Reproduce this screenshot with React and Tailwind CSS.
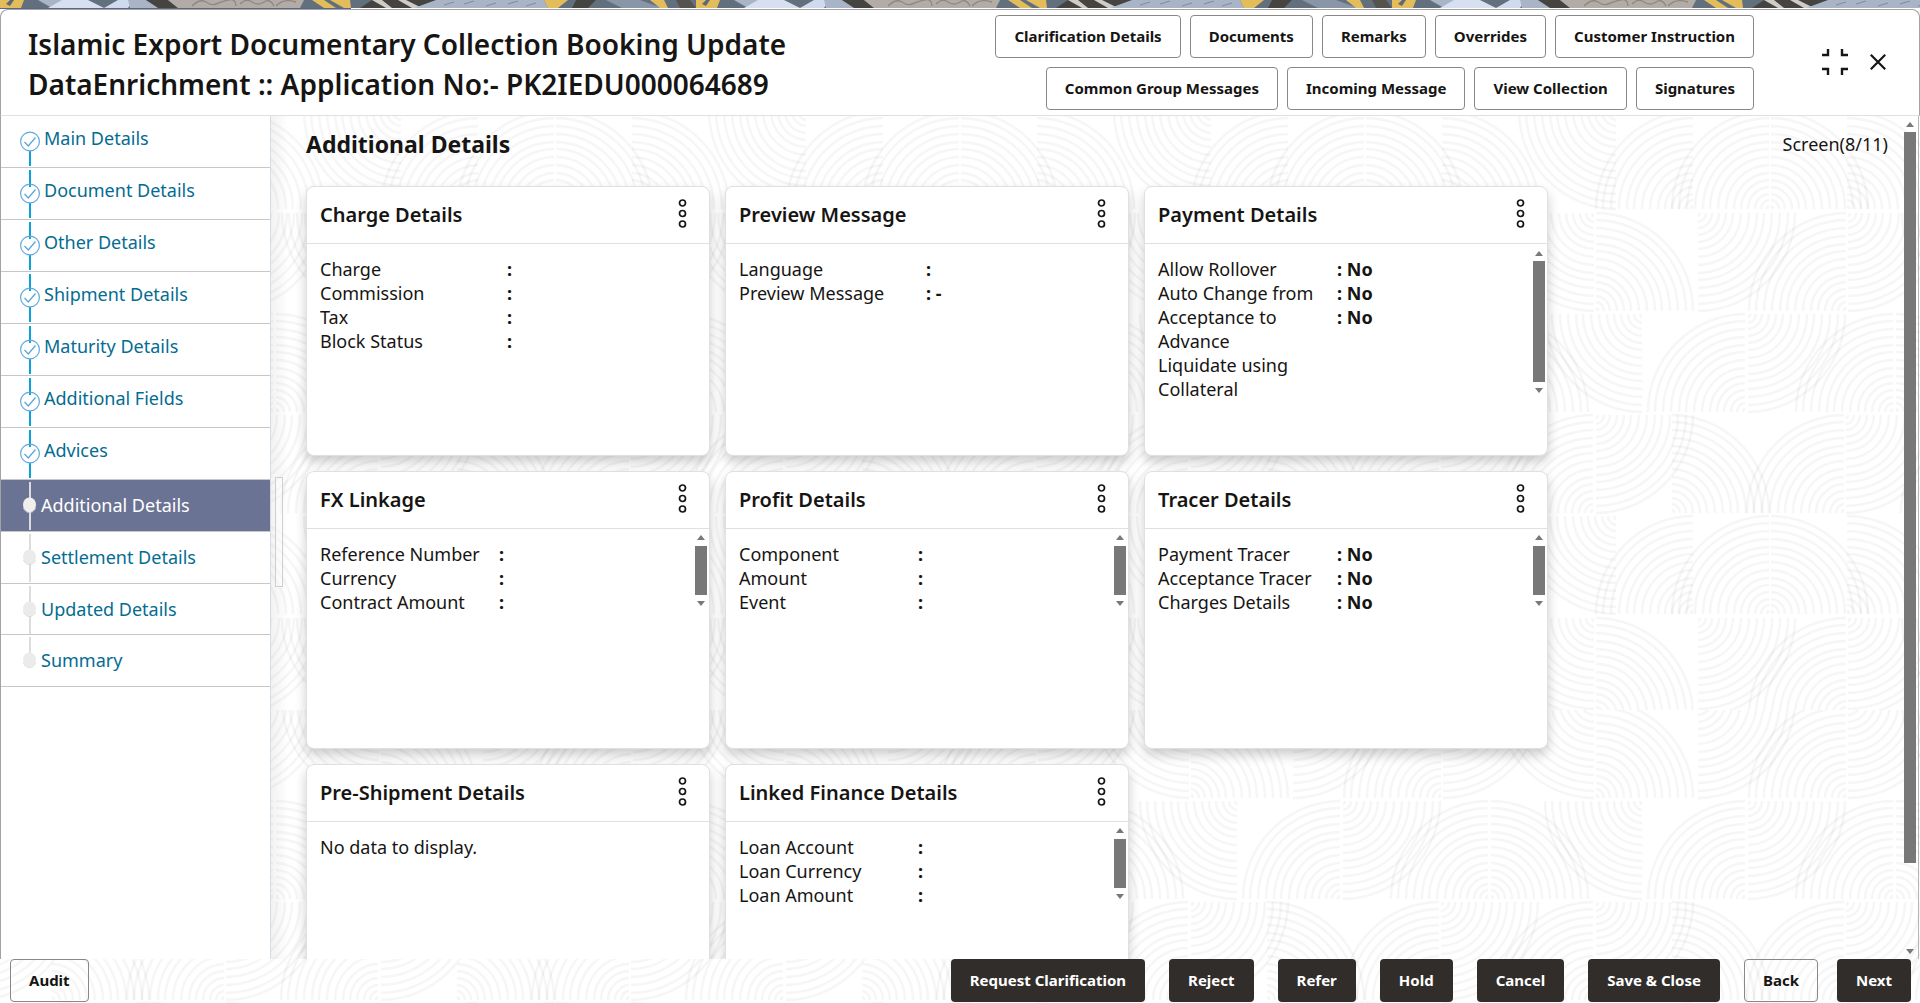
import React, { useId } from "react";

/* ---------- decorative backgrounds ---------- */

const TILE = 405;

// Quarter fans of concentric arcs: [centre x, row, vertical edge, horizontal direction]
const FANS = [
  [77, 3, "top", -1], [154, 3, "bottom", -1], [230, 3, "bottom", -1], [230, 3, "bottom", 1], [306, 3, "bottom", 1],
  [55, 0, "top", -1], [55, 0, "bottom", 1], [157, 0, "top", 1], [307, 0, "bottom", -1], [307, 0, "top", 1],
  [103, 1, "top", -1], [206, 1, "bottom", -1], [207, 1, "top", 1], [354, 1, "bottom", -1], [355, 1, "bottom", 1],
  [54, 2, "bottom", -1], [55, 2, "top", 1], [131, 2, "bottom", 1], [305, 2, "bottom", -1], [305, 2, "top", 1],
];
const RADII = [3, 9, 15, 22, 29, 36, 44, 52, 60, 67, 75, 83, 91, 98];

function fanPath([cx, row, edge, dir]) {
  const top = row * 101 + 2;
  const cy = edge === "top" ? top : top + 98;
  const sy = edge === "top" ? 1 : -1;
  const sweep = dir * sy > 0 ? 1 : 0;
  return RADII.map((r) =>
    [-TILE, 0, TILE]
      .map((s) => `M${cx + s + dir * r} ${cy}A${r} ${r} 0 0 ${sweep} ${cx + s + dir} ${cy + sy * r}`)
      .join("")
  ).join("");
}

function Waves({ offsetY }) {
  const id = useId();
  return (
    <svg aria-hidden="true" className="block h-full w-full">
      <defs>
        <pattern id={id} x="-80" y={offsetY} width={TILE} height={TILE} patternUnits="userSpaceOnUse">
          {FANS.map((f, i) => (
            <path key={i} d={fanPath(f)} fill="none" stroke="#000" strokeOpacity="0.034" strokeWidth="2.4" />
          ))}
        </pattern>
      </defs>
      <rect width="100%" height="100%" fill={`url(#${id})`} />
    </svg>
  );
}

function Banner() {
  const id = useId();
  return (
    <svg aria-hidden="true" className="block h-2 w-full">
      <defs>
        <pattern id={id} width="696" height="8" patternUnits="userSpaceOnUse">
          <rect width="696" height="8" fill="#61707c" />
          <path d="M0 0H24L21 8H0Z" fill="#e3bd5c" />
          <path d="M10 0l4 0l-4 6l-4-2z" fill="#5d6a74" />
          <path d="M38 0H70L90 8H52Z" fill="#a9b4c6" />
          <path d="M62 0H88L104 8H72L48 8Z" fill="#d6e0f1" />
          <path d="M118 0H134L128 8H104Z" fill="#cfdaee" />
          <path d="M128 0H146L160 8H130Z" fill="#a9b4c6" />
          <path d="M146 0H168L178 8H158Z" fill="#464440" />
          <path d="M168 0H304L300 8H178Z" fill="#b3aca6" />
          <path d="M192 6q8-8 14-4t10 2t12-4t8 6M240 4q6-6 12-2t12 0t10 4M276 6q8-8 20-4" stroke="#8e8882" fill="none" strokeWidth="1.4" />
          <path d="M312 0H324L336 8H324Z" fill="#e3bd5c" />
          <path d="M330 0H350L351 8H344Z" fill="#e3bd5c" />
          <path d="M372 0H440L424 8H360Z" fill="#464440" />
          <path d="M372 0H382L392 8H386Z" fill="#cfcbc6" />
          <path d="M398 0H406L422 8H412Z" fill="#cfcbc6" />
          <path d="M436 0H544L548 8H414Z" fill="#a9b4c6" />
          <path d="M444 5l10-3M464 4l10-3M486 6l10-3M508 4l10-3M526 6l10-3" stroke="#7e8a9c" strokeWidth="1" />
          <path d="M544 0H568L558 8H548Z" fill="#e3bd5c" />
          <path d="M576 0H596L588 8H572Z" fill="#464440" />
          <path d="M606 0H640L662 8H622Z" fill="#8996a8" />
          <path d="M650 0H664L668 8H660Z" fill="#e3bd5c" />
          <path d="M676 0H690L696 8H680Z" fill="#55534d" />
        </pattern>
      </defs>
      <rect width="100%" height="8" fill={`url(#${id})`} />
    </svg>
  );
}

/* ---------- small parts ---------- */

const Arrow = ({ down }) => (
  <svg aria-hidden="true" width="8" height="5" viewBox="0 0 8 5">
    <path d={down ? "M0 0H8L4 5Z" : "M0 5H8L4 0Z"} fill="#787878" />
  </svg>
);

function ScrollTrack({ className, thumb }) {
  return (
    <div className={`flex w-3 shrink-0 flex-col items-center ${className}`}>
      <div className="flex h-4 items-center"><Arrow /></div>
      <div className={`w-full bg-[#787878] ${thumb}`} />
      <div className="mt-auto flex h-4 items-center"><Arrow down /></div>
    </div>
  );
}

function OutlineButton({ children }) {
  return (
    <button type="button" className="h-[43px] rounded border border-[#8b8782] px-[18px] text-[15px] font-bold whitespace-nowrap text-[#161513]">
      {children}
    </button>
  );
}

function DarkButton({ children }) {
  return (
    <button type="button" className="h-[43px] rounded bg-[#312d2a] px-[19px] text-[15px] font-bold whitespace-nowrap text-white">
      {children}
    </button>
  );
}

/* ---------- header ---------- */

const ACTIONS = [
  "Clarification Details", "Documents", "Remarks", "Overrides", "Customer Instruction",
  "Common Group Messages", "Incoming Message", "View Collection", "Signatures",
];

function Header() {
  return (
    <header className="flex h-[107px] shrink-0 items-start rounded-t-lg border border-[#a3a3a3] border-b-[#e0e0e0] bg-white">
      <h1 className="w-[820px] shrink-0 pt-[14px] pl-[27px] text-[28px] leading-10 font-semibold">
        Islamic Export Documentary Collection Booking Update DataEnrichment :: Application No:- PK2IEDU000064689
      </h1>
      <div className="ml-auto flex w-[780px] flex-wrap justify-end gap-[9px] pt-[5px]">
        {ACTIONS.map((a) => <OutlineButton key={a}>{a}</OutlineButton>)}
      </div>
      <div className="flex w-[165px] shrink-0 items-center justify-end gap-[22px] pt-[39px] pr-[33px]">
        <button type="button" aria-label="Collapse">
          <svg width="26" height="26" viewBox="0 0 26 26" fill="none" stroke="#161513" strokeWidth="2.4">
            <path d="M0 6H6V0M20 0V6H26M0 20H6V26M20 26V20H26" />
          </svg>
        </button>
        <button type="button" aria-label="Close">
          <svg width="16" height="16" viewBox="0 0 16 16" fill="none" stroke="#161513" strokeWidth="2.2">
            <path d="M0.8 0.8L15.2 15.2M15.2 0.8L0.8 15.2" />
          </svg>
        </button>
      </div>
    </header>
  );
}

/* ---------- navigation ---------- */

const STEPS = [
  ["Main Details", "done"], ["Document Details", "done"], ["Other Details", "done"], ["Shipment Details", "done"],
  ["Maturity Details", "done"], ["Additional Fields", "done"], ["Advices", "done"], ["Additional Details", "active"],
  ["Settlement Details", "todo"], ["Updated Details", "todo"], ["Summary", "todo"],
];

function StepMark({ state, first, last }) {
  if (state === "done") {
    return (
      <svg aria-hidden="true" className="block" width="22" height="51" viewBox="0 0 22 51" fill="none">
        {!first && <path d="M11 2V19" stroke="#0ba1db" strokeWidth="2" />}
        <path d="M11 35V50" stroke="#0ba1db" strokeWidth="2" />
        <circle cx="11" cy="25.500" r="9.400" stroke="#5fa9dd" strokeWidth="1.200" />
        <path d="M5.500 26L9.300 30L16.500 21.500" stroke="#5fa9dd" strokeWidth="1.400" />
      </svg>
    );
  }
  return (
    <svg aria-hidden="true" className="block" width="22" height="51" viewBox="0 0 22 51" fill="none">
      <path d={last ? "M11 2V24" : "M11 2V50"} stroke="#dcdcdc" strokeWidth="2" />
      <ellipse cx="10.500" cy="24.800" rx="6.500" ry="7.400" fill={state === "active" ? "#f1efed" : "#ebebeb"} />
      <path d="M4.500 28a6.500 7.400 0 0 0 12 0" stroke="#d6d6d6" strokeWidth="0.800" />
    </svg>
  );
}

function Steps() {
  return (
    <nav className="w-[271px] shrink-0 border-r border-l border-r-[#d3dde5] border-l-[#a3a3a3] bg-white">
      <ol>
        {STEPS.map(([label, state], i) => (
          <li key={label} className={`border-b border-[#c9c7c5] ${state === "active" ? "bg-[#6b7394]" : ""}`}>
            <a
              href="#"
              className={`flex pl-[18px] text-lg ${state === "active" ? "text-white" : "text-[#036c92]"} ${i === 9 ? "h-[50px]" : "h-[51px]"}`}
            >
              <StepMark state={state} first={i === 0} last={i === STEPS.length - 1} />
              <span className={state === "done" ? "ml-[3px] leading-[44px]" : "leading-[51px]"}>{label}</span>
            </a>
          </li>
        ))}
      </ol>
    </nav>
  );
}

/* ---------- cards ---------- */

const SHORT = { track: "h-[81px]", thumb: "h-[50px]" };

const CARDS = [
  { title: "Charge Details", height: "h-[270px]", label: "w-[187px]",
    labels: ["Charge", "Commission", "Tax", "Block Status"], values: ["", "", "", ""] },
  { title: "Preview Message", height: "h-[270px]", label: "w-[187px]",
    labels: ["Language", "Preview Message"], values: ["", "-"] },
  { title: "Payment Details", height: "h-[270px]", label: "w-[179px]",
    labels: ["Allow Rollover", "Auto Change from Acceptance to Advance", "Liquidate using Collateral"],
    values: ["No", "No", "No"], scroll: { track: "h-[153px]", thumb: "h-[121px]" } },
  { title: "FX Linkage", height: "h-[278px]", label: "w-[179px]",
    labels: ["Reference Number", "Currency", "Contract Amount"], values: ["", "", ""], scroll: SHORT },
  { title: "Profit Details", height: "h-[278px]", label: "w-[179px]",
    labels: ["Component", "Amount", "Event"], values: ["", "", ""], scroll: SHORT },
  { title: "Tracer Details", height: "h-[278px]", label: "w-[179px]",
    labels: ["Payment Tracer", "Acceptance Tracer", "Charges Details"], values: ["No", "No", "No"], scroll: SHORT },
  { title: "Pre-Shipment Details", height: "h-[278px]", empty: "No data to display." },
  { title: "Linked Finance Details", height: "h-[278px]", label: "w-[179px]",
    labels: ["Loan Account", "Loan Currency", "Loan Amount"], values: ["", "", ""], scroll: SHORT },
];

function Card({ card }) {
  return (
    <section className={`flex w-[404px] flex-col rounded-lg border border-[#e0e0e0] bg-white shadow-[0_6px_12px_rgba(0,0,0,0.2)] ${card.height}`}>
      <div className="flex h-[57px] shrink-0 items-center justify-between border-b border-[#e0e0e0] pr-[22px] pl-[13px]">
        <h3 className="text-xl font-semibold">{card.title}</h3>
        <button type="button" aria-label={`${card.title} menu`}>
          <svg className="block" width="9" height="32" viewBox="0 0 9 32" fill="none" stroke="#161513" strokeWidth="1.7">
            <circle cx="4.500" cy="4" r="3" />
            <circle cx="4.500" cy="14.500" r="3" />
            <circle cx="4.500" cy="25" r="3" />
          </svg>
        </button>
      </div>
      <div className="flex pr-[2px] pl-[13px]">
        {card.empty ? (
          <p className="pt-[13px] text-lg leading-6">{card.empty}</p>
        ) : (
          <>
            <ul className={`shrink-0 pt-[13px] pr-4 text-lg leading-6 ${card.label}`}>
              {card.labels.map((l) => <li key={l}>{l}</li>)}
            </ul>
            <ul className="flex-1 pt-[13px] text-lg leading-6 font-bold">
              {card.values.map((v, i) => <li key={i}>: {v}</li>)}
            </ul>
          </>
        )}
        {card.scroll && <ScrollTrack className={`mt-[1px] ${card.scroll.track}`} thumb={card.scroll.thumb} />}
      </div>
    </section>
  );
}

/* ---------- page ---------- */

const FOOTER = ["Request Clarification", "Reject", "Refer", "Hold", "Cancel", "Save & Close"];

export default function App() {
  return (
    <div className="relative isolate flex h-screen flex-col overflow-hidden bg-white font-['Noto_Sans','Open_Sans',sans-serif] text-[#161513]">
      <div className="absolute inset-0 -z-10 flex flex-col">
        <div className="h-[710px]"><Waves offsetY={211} /></div>
        <div className="flex-1"><Waves offsetY={-12} /></div>
      </div>

      <div className="bg-[linear-gradient(90deg,#5b648a_351px,#ffffff_351px)] pb-px">
        <Banner />
      </div>
      <Header />

      <div className="flex min-h-0 flex-1">
        <Steps />
        <div className="flex w-[35px] shrink-0 items-center bg-linear-to-r from-black/5 to-transparent to-50% pb-3 pl-1">
          <div className="h-[110px] w-2 border border-[#cfcfcf] bg-white/40" />
        </div>
        <main className="min-w-0 flex-1">
          <div className="-ml-8 h-full overflow-hidden pl-8">
            <div className="flex items-center justify-between pt-[13px] pr-4 pb-[27px]">
              <h2 className="text-[23px] leading-[30px] font-bold">Additional Details</h2>
              <span className="text-lg">Screen(8/11)</span>
            </div>
            <div className="flex flex-wrap gap-[15px]">
              {CARDS.map((c) => <Card key={c.title} card={c} />)}
            </div>
          </div>
        </main>
        <ScrollTrack className="mr-[2px]" thumb="h-[731px]" />
        <div className="mr-px w-px bg-[#b5b5b5]" />
      </div>

      <footer className="flex shrink-0 items-center pr-[9px] pb-px pl-[10px]">
        <OutlineButton>Audit</OutlineButton>
        <div className="ml-auto flex gap-6">
          {FOOTER.map((f) => <DarkButton key={f}>{f}</DarkButton>)}
          <div className="flex gap-[19px]">
            <OutlineButton>Back</OutlineButton>
            <DarkButton>Next</DarkButton>
          </div>
        </div>
      </footer>
    </div>
  );
}
